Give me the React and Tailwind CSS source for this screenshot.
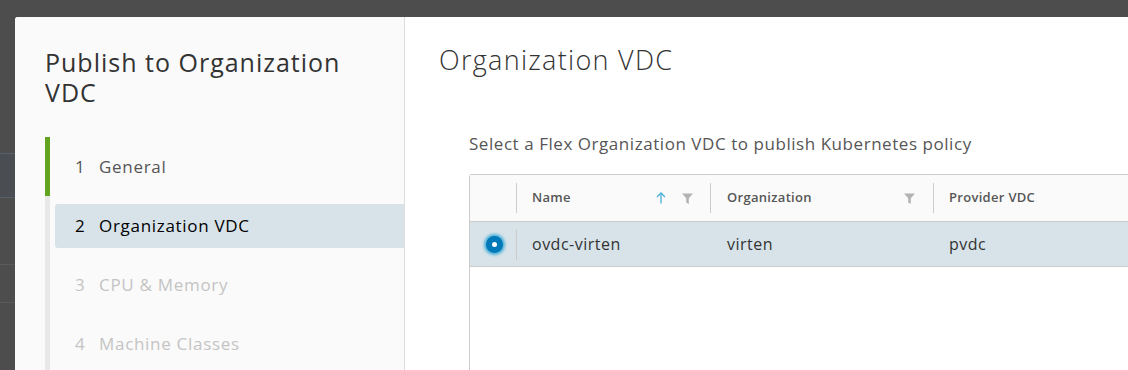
import React from "react";

const font = { fontFamily: '"Open Sans", "Liberation Sans", sans-serif' };

const SortUp = () => (
  <svg width="10" height="12" viewBox="0 0 10 12" fill="none" stroke="#49afd9" strokeWidth="1.3">
    <path d="M5 11.5V1.2" />
    <path d="M1 5L5 1l4 4" />
  </svg>
);

const Filter = () => (
  <svg width="11" height="11" viewBox="0 0 11 11" fill="#b3b3b3">
    <path d="M0 0.5h11L6.8 5.2V11L4.2 9.6V5.2z" />
  </svg>
);

const steps = [
  { n: 1, label: "General", state: "done" },
  { n: 2, label: "Organization VDC", state: "current" },
  { n: 3, label: "CPU & Memory", state: "todo" },
  { n: 4, label: "Machine Classes", state: "todo" },
];

const Step = ({ step }) => {
  if (step.state === "current") {
    return (
      <div className="h-[59px] flex items-center border-l-[5px] border-[#e8e8e8]">
        <div className="ml-[5px] flex-1 h-[44px] rounded-l-[3px] bg-[#d8e3e9] flex items-center pl-[20px] text-[17px] tracking-[0.7px] text-[#000]">
          <span className="w-[24px]">{step.n}</span>
          <span>{step.label}</span>
        </div>
      </div>
    );
  }
  return (
    <div
      className={
        step.state === "done"
          ? "h-[59px] flex items-center border-l-[5px] border-[#62a420] pl-[25px] text-[17px] tracking-[0.7px] text-[#565656]"
          : "h-[59px] flex items-center border-l-[5px] border-[#e8e8e8] pl-[25px] text-[17px] tracking-[0.7px] text-[#c4c4c4]"
      }
    >
      <span className="w-[24px]">{step.n}</span>
      <span>{step.label}</span>
    </div>
  );
};

export default function App() {
  return (
    <div className="w-[1128px] h-[370px] bg-[#4d4d4d] flex overflow-hidden" style={font}>
      {/* page behind the modal */}
      <div className="w-[15px] flex flex-col shrink-0">
        <div className="h-[154px] border-b border-[#56606a]" />
        <div className="h-[44px] bg-[#4a4d51] border-b border-[#56606a]" />
        <div className="h-[67px] border-b border-[#5a5a5a]" />
        <div className="h-[38px] border-b border-[#5a5a5a]" />
      </div>

      <div className="flex-1 flex flex-col">
        <div className="h-[17px] shrink-0" />
        <div className="flex-1 flex rounded-tl-[3px] overflow-hidden bg-white">
          {/* sidebar */}
          <div className="w-[390px] shrink-0 bg-[#fafafa] border-r border-[#dddddd] pl-[30px] pt-[30px]">
            <h1 className="text-[25px] leading-[30px] tracking-[1px] text-[#333333] font-normal w-[320px]">
              Publish to Organization VDC
            </h1>
            <div className="mt-[30px]">
              {steps.map((s) => (
                <Step key={s.n} step={s} />
              ))}
            </div>
          </div>

          {/* content */}
          <div className="flex-1 pl-[34px] pt-[27px]">
            <h2 className="text-[27px] leading-[32px] tracking-[1.3px] font-light text-[#333333]">Organization VDC</h2>
            <div className="pl-[30px] mt-[56px]">
              <p className="text-[17px] leading-[24px] tracking-[0.55px] text-[#565656]">
                Select a Flex Organization VDC to publish Kubernetes policy
              </p>
              <div className="mt-[18px] border border-r-0 border-[#cccccc] rounded-tl-[3px] h-[200px]">
                <div className="h-[47px] bg-[#fafafa] border-b border-[#cccccc] flex items-center text-[13px] tracking-[0.3px] font-semibold text-[#565656]">
                  <div className="w-[47px] h-[30px] border-r border-[#cccccc]" />
                  <div className="w-[194px] h-[30px] border-r border-[#cccccc] flex items-center pl-[15px] pr-[17px]">
                    <span className="flex-1">Name</span>
                    <span className="mr-[16px] flex"><SortUp /></span>
                    <Filter />
                  </div>
                  <div className="w-[223px] h-[30px] border-r border-[#cccccc] flex items-center pl-[16px] pr-[18px]">
                    <span className="flex-1">Organization</span>
                    <Filter />
                  </div>
                  <div className="flex-1 h-[30px] flex items-center pl-[15px]">Provider VDC</div>
                </div>
                <div className="h-[45px] bg-[#d8e3e9] border-b border-[#cccccc] flex items-center text-[16px] tracking-[0.5px] text-[#333333]">
                  <div className="w-[47px] h-[31px] border-r border-[#cccccc] flex items-center justify-center pl-[2px]">
                    <div className="w-[17px] h-[17px] rounded-full bg-[#0079b8] shadow-[0_0_3px_2px_#49afd9] flex items-center justify-center">
                      <div className="w-[5px] h-[5px] rounded-full bg-white" />
                    </div>
                  </div>
                  <div className="w-[194px] pl-[15px]">ovdc-virten</div>
                  <div className="w-[223px] pl-[16px]">virten</div>
                  <div className="flex-1 pl-[15px]">pvdc</div>
                </div>
              </div>
            </div>
          </div>
        </div>
      </div>
    </div>
  );
}
